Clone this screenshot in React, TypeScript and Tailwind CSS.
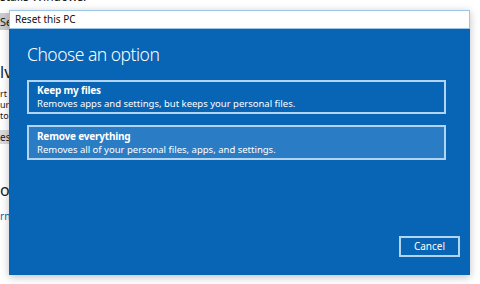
export default function App() {
  const font = { fontFamily: '"Noto Sans", "Open Sans", sans-serif' };
  return (
    <div className="relative h-[284px] w-[480px] overflow-hidden bg-white text-[#1a1a1a]" style={font}>
      {/* settings page behind the dialog */}
      <div className="flex flex-col items-start whitespace-nowrap text-[9px]">
        <p className="-mt-[11px] h-[16px] text-[12px] leading-[16px]">stalls Windows.</p>
        <div className="mt-[8px] h-[17px] w-[40px] bg-[#cccccc] text-[11px] leading-[17px]">Set</div>
        <p className="mt-[32px] h-[20px] text-[16px] leading-[20px]">lv</p>
        <p className="mt-[6px] h-[11px] leading-[11px]">rt</p>
        <p className="h-[11px] leading-[11px]">ur</p>
        <p className="h-[11px] leading-[11px]">to</p>
        <div className="mt-[9px] h-[14px] w-[40px] bg-[#dadada] text-[10px] leading-[14px]">es</div>
        <p className="mt-[36px] h-[20px] text-[16px] leading-[20px]">or</p>
        <p className="mt-[10px] h-[12px] text-[10px] leading-[12px] text-[#0067b8]">rn</p>
      </div>

      {/* Reset this PC dialog */}
      <div className="absolute left-[9px] top-[10px] flex h-[265px] w-[461px] flex-col shadow-[0_2px_8px_rgba(0,0,0,0.25)]">
        <div className="flex h-[19px] items-center border border-[#9cc6e8] bg-white pl-[5px] text-[10px] text-[#111]">
          Reset this PC
        </div>
        <div className="flex flex-1 flex-col bg-[#0864b4] px-[18px] pb-[18px] pt-[13px] text-white">
          <h1 className="text-[17.5px] font-light leading-[24px] tracking-[-0.5px]">Choose an option</h1>
          <button className="mt-[14px] flex h-[34px] w-[419px] flex-col justify-center border-2 border-[#b3d4ef] px-[8px] text-left">
            <span className="text-[10px] font-bold leading-[13px] tracking-[-0.2px]">Keep my files</span>
            <span className="text-[9.5px] leading-[13px]">Removes apps and settings, but keeps your personal files.</span>
          </button>
          <button className="mt-[11px] flex h-[35px] w-[419px] flex-col justify-center border-2 border-[#b3d4ef] bg-[#2a7cc4] px-[8px] text-left">
            <span className="text-[10px] font-bold leading-[13px] tracking-[-0.2px]">Remove everything</span>
            <span className="text-[9.5px] leading-[13px]">Removes all of your personal files, apps, and settings.</span>
          </button>
          <div className="mt-auto flex justify-end">
            <button className="-mr-[8px] h-[21px] w-[61px] border-2 border-[#b3d4ef] text-[10px]">Cancel</button>
          </div>
        </div>
      </div>
    </div>
  );
}
